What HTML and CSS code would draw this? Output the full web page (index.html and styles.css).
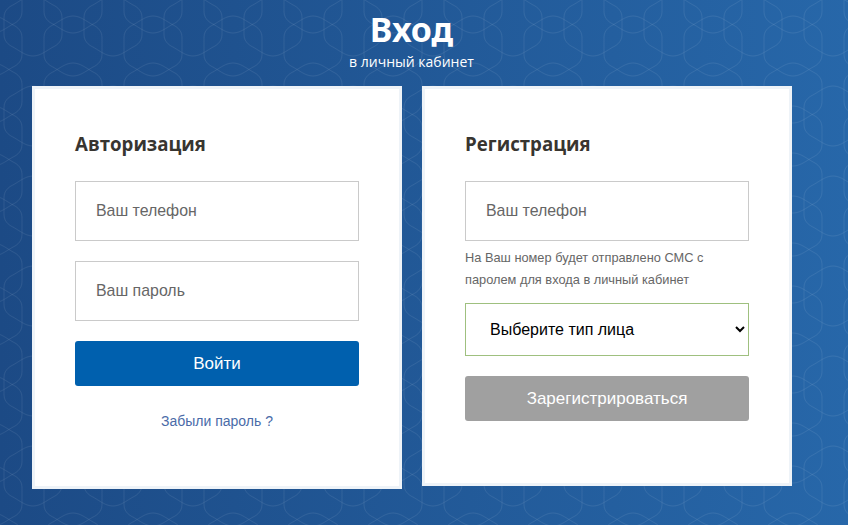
FILE: index.html
```html
<!DOCTYPE html>
<html lang="ru">
<head>
<meta charset="utf-8">
<title>Вход</title>
<link rel="stylesheet" href="styles.css">
</head>
<body>
<main class="page">
  <header class="head">
    <h1 class="head-title">Вход</h1>
    <p class="head-sub">в личный кабинет</p>
  </header>
  <div class="cards">
    <section class="card card-login">
      <h2 class="card-title">Авторизация</h2>
      <form class="form">
        <input class="field" type="text" placeholder="Ваш телефон">
        <input class="field field-next" type="password" placeholder="Ваш пароль">
        <button class="btn btn-primary" type="button">Войти</button>
        <a class="forgot" href="#">Забыли пароль ?</a>
      </form>
    </section>
    <section class="card card-register">
      <h2 class="card-title">Регистрация</h2>
      <form class="form">
        <input class="field" type="text" placeholder="Ваш телефон">
        <p class="note">На Ваш номер будет отправлено СМС с паролем для входа в личный кабинет</p>
        <select class="type-select">
          <option>Выберите тип лица</option>
        </select>
        <button class="btn btn-muted" type="button">Зарегистрироваться</button>
      </form>
    </section>
  </div>
</main>
</body>
</html>
```

FILE: styles.css
```css
* { box-sizing: border-box; }
html, body { margin: 0; height: 100%; }
body {
  overflow: hidden;
  font-family: "Liberation Sans", Arial, sans-serif;
  background-color: #22599a;
  background-image:
    url("data:image/svg+xml,%3Csvg xmlns='http://www.w3.org/2000/svg' xmlns:xlink='http://www.w3.org/1999/xlink' width='80' height='90'%3E%3Cdefs%3E%3Cpath id='h' d='M0,-30 C8,-30 14,-24 22,-20 C27,-17 29,-13 29,-8 L29,8 C29,13 27,17 22,20 C14,24 8,30 0,30 C-8,30 -14,24 -22,20 C-27,17 -29,13 -29,8 L-29,-8 C-29,-13 -27,-17 -22,-20 C-14,-24 -8,-30 0,-30 Z'/%3E%3C/defs%3E%3Cg fill='none' stroke='%23ffffff' stroke-opacity='.08'%3E%3Cuse xlink:href='%23h' x='33' y='26'/%3E%3Cuse xlink:href='%23h' x='33' y='116'/%3E%3Cuse xlink:href='%23h' x='73' y='46'/%3E%3Cuse xlink:href='%23h' x='-7' y='46'/%3E%3Cuse xlink:href='%23h' x='73' y='3'/%3E%3Cuse xlink:href='%23h' x='-7' y='3'/%3E%3Cuse xlink:href='%23h' x='73' y='93'/%3E%3Cuse xlink:href='%23h' x='-7' y='93'/%3E%3C/g%3E%3C/svg%3E"),
    linear-gradient(to right, #1c4a85, #2767a9);
}
.page { width: 760px; margin-left: 32px; }
.head { height: 86px; padding-top: 7px; padding-right: 1px; text-align: center; color: #fff; }
.head-title {
  margin: 0;
  font: 700 34px/44px "Noto Sans", sans-serif;
}
.head-sub {
  margin: 0;
  padding-top: 1px;
  font: 400 14px/20px "Open Sans", sans-serif;
}
.cards { display: flex; align-items: flex-start; gap: 20px; }
.card {
  flex: 0 0 370px;
  padding: 0 40px;
  background: #fff;
  border: 3px solid #eef3f8;
}
.card-login { padding-bottom: 55px; }
.card-register { padding-bottom: 62px; }
.card-title {
  margin: 0;
  padding-top: 41px;
  font: 700 18.7px/28px "Open Sans", sans-serif;
  color: #383530;
}
.form { display: flex; flex-direction: column; padding-top: 23px; }
.field {
  display: block;
  width: 284px;
  height: 60px;
  padding: 0 20px;
  border: 1px solid #cacaca;
  border-radius: 0;
  background: #fff;
  font: 400 15.9px "Liberation Sans", sans-serif;
  color: #333;
  outline: none;
}
.field::placeholder { color: #666; opacity: 1; }
.field-next { margin-top: 20px; }
.btn {
  display: block;
  width: 284px;
  height: 45px;
  border: 0;
  border-radius: 3px;
  color: #fff;
  font: 400 17px "Liberation Sans", sans-serif;
}
.btn-primary { margin-top: 20px; background: #0060ae; }
.btn-muted { margin-top: 20px; background: #a0a0a0; }
.forgot {
  margin-top: 25px;
  text-align: center;
  font-size: 14px;
  line-height: 20px;
  color: #4a6ba8;
  text-decoration: none;
}
.note {
  margin: 6px 0 0;
  font-size: 12.8px;
  line-height: 22px;
  color: #666;
}
.type-select {
  display: block;
  width: 284px;
  height: 53px;
  margin-top: 12px;
  padding: 0 20px;
  border: 1px solid #9fc07f;
  border-radius: 0;
  background: #fff;
  font: 400 16px "Liberation Sans", sans-serif;
  color: #000;
  outline: none;
}
```
